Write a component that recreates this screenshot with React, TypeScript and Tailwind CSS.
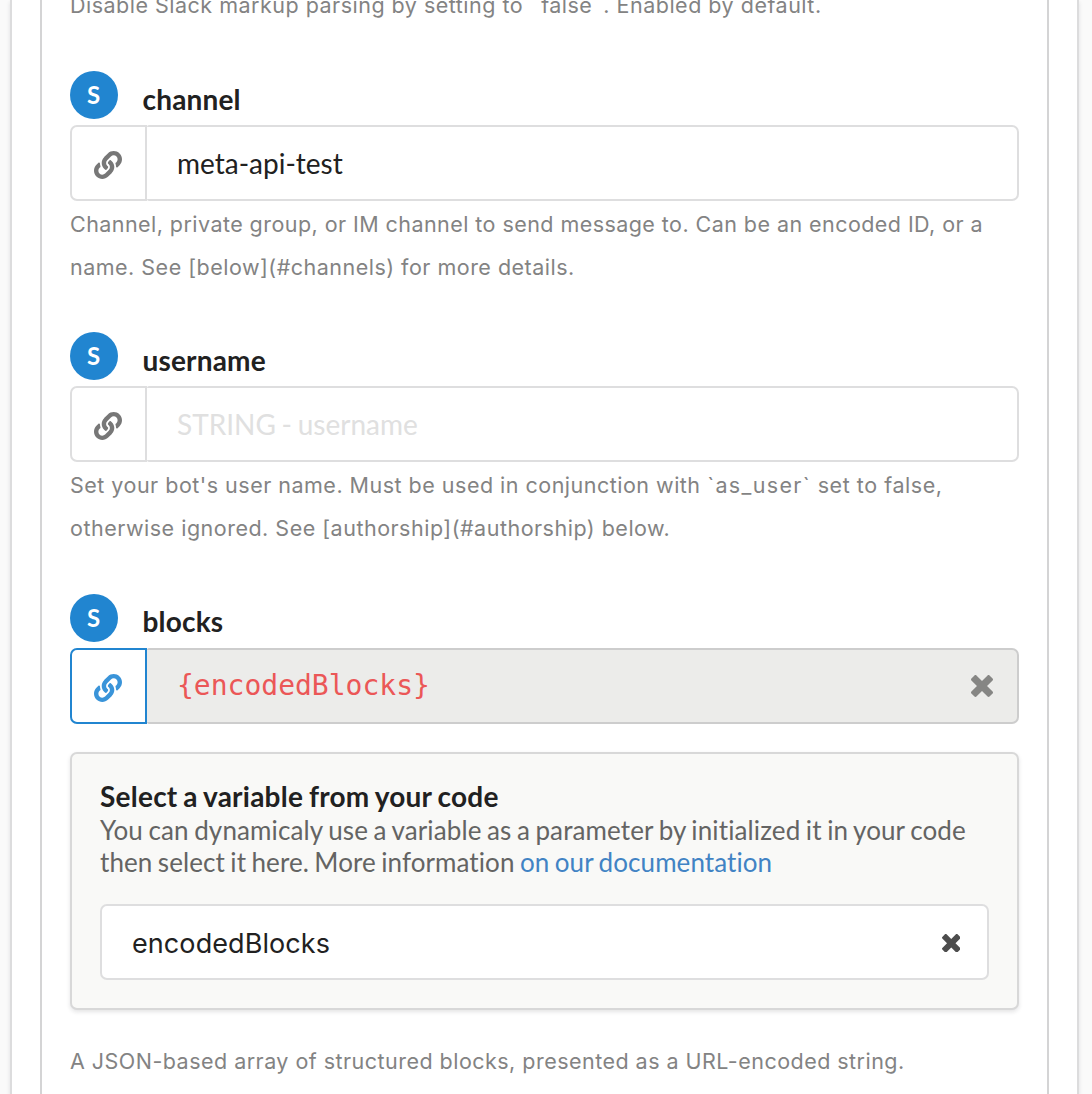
import type { ReactNode } from 'react';
import { FaLink } from 'react-icons/fa';

function Cross({ className }: { className: string }) {
  return (
    <svg viewBox="0 64 384 384" fill="currentColor" className={className} aria-hidden="true">
      <path d="M323.1 441l53.9-53.9c9.4-9.4 9.4-24.5 0-33.9L279.8 256l97.2-97.2c9.4-9.4 9.4-24.5 0-33.9L323.1 71c-9.4-9.4-24.5-9.4-33.9 0L192 168.2 94.8 71c-9.4-9.4-24.5-9.4-33.9 0L7 124.9c-9.4 9.4-9.4 24.5 0 33.9l97.2 97.2L7 353.2c-9.4 9.4-9.4 24.5 0 33.9L60.9 441c9.4 9.4 24.5 9.4 33.9 0l97.2-97.2 97.2 97.2c9.3 9.3 24.5 9.3 33.9 0z" />
    </svg>
  );
}

function Help({ children, className }: { children: ReactNode; className: string }) {
  return (
    <p className={`h-[43px] whitespace-pre font-['Inter',sans-serif] text-[21.5px] leading-[43px] text-[#838383] ${className}`}>
      {children}
    </p>
  );
}

function Label({ name, className = 'mt-2' }: { name: string; className?: string }) {
  return (
    <div className="flex h-[54px] items-start">
      <span className="flex size-12 items-center justify-center rounded-full bg-[#2185d0] pr-px text-2xl font-bold text-white">S</span>
      <label className={`ml-[24.5px] text-[28px] leading-10 font-bold tracking-[0.18px] text-[#212121] ${className}`}>{name}</label>
    </div>
  );
}

function Field({ active = false, children }: { active?: boolean; children: ReactNode }) {
  return (
    <div className="flex h-[76px]">
      <button
        className={`flex w-[77px] items-center justify-center rounded-l-[7px] border-2 pt-1 pr-0.5 ${
          active ? 'border-[#2185d0] text-[#3a94d9]' : 'border-[#dededf] text-[#777777]'
        }`}
      >
        <FaLink size={28} />
      </button>
      <div
        className={`flex flex-1 items-center justify-between rounded-l-[2px] rounded-r-[7px] border-2 border-l-0 pr-6 pl-[30px] text-[28px] ${
          active ? 'border-[#cdcdcd] bg-[#ececea]' : 'border-[#dededf] bg-white'
        }`}
      >
        {children}
      </div>
    </div>
  );
}

export default function App() {
  return (
    <div className="h-[1094px] overflow-hidden bg-[#fafafa] pr-[13px] pl-[10px] font-['Lato',sans-serif] [font-variant-ligatures:no-common-ligatures]">
      <div className="h-full border-x-2 border-[#dcdcdd] bg-white px-7 shadow-[0_2px_4px_rgba(34,36,38,0.12)]">
        <div className="flow-root h-full border-x-2 border-[#d4d4d5] px-7">
          <Help className="-mt-4 tracking-[0.49px]">
            Disable Slack markup parsing by setting to <span className="tracking-[4.5px]">`</span>false
            <span className="tracking-[4px]">`</span>
            <span className="tracking-[0.5px]">. Enabled by default.</span>
          </Help>

          <section className="mt-11">
            <Label name="channel" />
            <Field>
              <span className="text-[#212121]">meta-api-test</span>
            </Field>
            <div className="mt-0.5">
              <Help className="tracking-[0.44px]">Channel, private group, or IM channel to send message to. Can be an encoded ID, or a</Help>
              <Help className="tracking-[0.49px]">name. See [below](#channels) for more details.</Help>
            </div>
          </section>

          <section className="mt-[43px]">
            <Label name="username" />
            <Field>
              <span className="text-[#e0e0e0] [word-spacing:-1.5px]">STRING - username</span>
            </Field>
            <div className="mt-0.5">
              <Help className="tracking-[0.49px]">
                Set your bot's user name. Must be used in conjunction with <span className="tracking-[1.35px]">`as_user`</span>
                <span className="tracking-[0.55px]"> set to false,</span>
              </Help>
              <Help className="tracking-[0.5px]">otherwise ignored. See [authorship](#authorship) below.</Help>
            </div>
          </section>

          <section className="mt-11">
            <Label name="blocks" className="mt-[7px]" />
            <Field active>
              <span className="font-['DejaVu_Sans_Mono',monospace] text-[#eb5757]">{'{encodedBlocks}'}</span>
              <Cross className="size-[22px] text-[#868684]" />
            </Field>

            <div className="mt-7 h-[258px] rounded-[7px] border-2 border-[#d8d8d8] bg-[#f9f9f7] px-7 pt-[26px] shadow-[0_2px_4px_rgba(34,36,38,0.12)]">
              <h3 className="text-[28px] leading-8 font-bold tracking-[0.24px] text-[#212121] [word-spacing:-1.2px]">Select a variable from your code</h3>
              <p className="mt-0.5 text-[26px] leading-8 tracking-[0.08px] whitespace-nowrap text-[#646463] [word-spacing:-1.3px]">
                <span className="tracking-[0.125px]">You can dynamicaly use a variable as a parameter by initialized it in your code</span>
                <br />
                then select it here. More information <a className="text-[#4183c4]">on our documentation</a>
              </p>
              <div className="mt-[26px] flex h-[76px] items-center justify-between rounded-[7px] border-2 border-[#dededf] bg-white pr-[27px] pl-[30px]">
                <span className="pt-[5px] font-['Inter',sans-serif] text-[27px] tracking-[0.08px] text-[#212121]">encodedBlocks</span>
                <Cross className="mt-0.5 size-[18.5px] text-[#4d4d4d]" />
              </div>
            </div>

            <Help className="mt-[30px] tracking-[0.47px]">A JSON-based array of structured blocks, presented as a URL-encoded string.</Help>
          </section>
        </div>
      </div>
    </div>
  );
}
